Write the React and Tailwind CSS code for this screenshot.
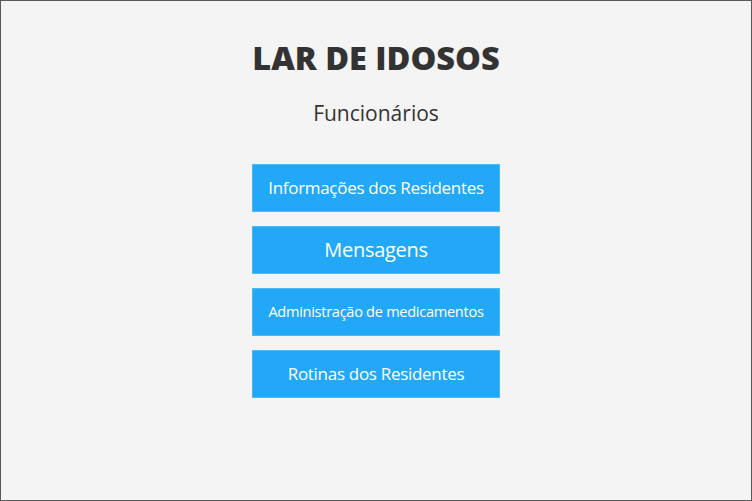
import React from 'react';

const botoes = [
  { texto: 'Informações dos Residentes', tamanho: 'text-[17px]' },
  { texto: 'Mensagens', tamanho: 'text-[20px]' },
  { texto: 'Administração de medicamentos', tamanho: 'text-[14.6px]' },
  { texto: 'Rotinas dos Residentes', tamanho: 'text-[17px]' },
];

const App = () => {
  return (
    <div
      className="w-[752px] h-[501px] bg-[#f4f4f4] border border-[#5a5a5a] flex flex-col items-center text-[#333]"
      style={{ fontFamily: '"Open Sans", "Noto Sans", sans-serif' }}
    >
      <h1 className="mt-[37px] text-[32.5px] font-extrabold leading-[40px]">LAR DE IDOSOS</h1>
      <h2 className="mt-[21px] text-[21px] leading-[28px]">Funcionários</h2>

      <div className="mt-[37px] flex flex-col gap-[14px]">
        {botoes.map((b) => (
          <button
            key={b.texto}
            className={`w-[248px] h-[48px] bg-[#22a8f6] border border-[#4cb9f7] text-white flex items-center justify-center tracking-[-0.3px] ${b.tamanho}`}
          >
            {b.texto}
          </button>
        ))}
      </div>
    </div>
  );
};

export default App;
